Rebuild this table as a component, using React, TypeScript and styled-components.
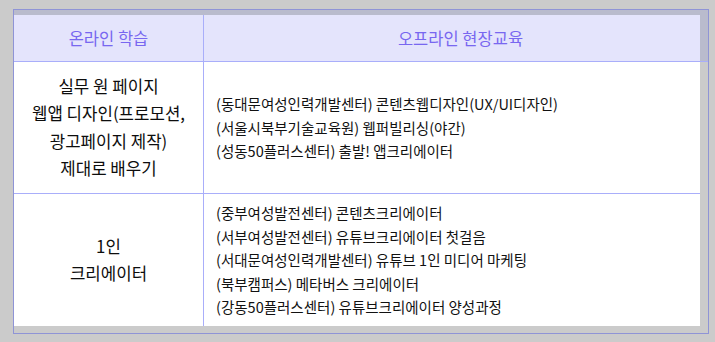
import styled, { createGlobalStyle } from "styled-components";

const LINE = "#a9aefa";

const GlobalStyle = createGlobalStyle`
  html, body {
    margin: 0;
    padding: 0;
    background: #cbcbcb;
    font-family: "Noto Sans CJK KR", "Noto Sans", sans-serif;
  }
`;

type Course = { org: string; title: string };

const rows: { topic: string[]; courses: Course[]; height: number }[] = [
  {
    topic: ["실무 원 페이지", "웹앱 디자인(프로모션,", "광고페이지 제작)", "제대로 배우기"],
    height: 131,
    courses: [
      { org: "동대문여성인력개발센터", title: "콘텐츠웹디자인(UX/UI디자인)" },
      { org: "서울시북부기술교육원", title: "웹퍼빌리싱(야간)" },
      { org: "성동50플러스센터", title: "출발! 앱크리에이터" },
    ],
  },
  {
    topic: ["1인", "크리에이터"],
    height: 132,
    courses: [
      { org: "중부여성발전센터", title: "콘텐츠크리에이터" },
      { org: "서부여성발전센터", title: "유튜브크리에이터 첫걸음" },
      { org: "서대문여성인력개발센터", title: "유튜브 1인 미디어 마케팅" },
      { org: "북부캠퍼스", title: "메타버스 크리에이터" },
      { org: "강동50플러스센터", title: "유튜브크리에이터 양성과정" },
    ],
  },
];

const App = () => {
  return (
    <>
      <GlobalStyle />
      <Frame>
        <HeadBand>
          <HeaderRow>
            <HeadCell>온라인 학습</HeadCell>
            <HeadCell wide>오프라인 현장교육</HeadCell>
          </HeaderRow>
        </HeadBand>
        <Body>
          {rows.map((row, i) => (
            <Row key={i} h={row.height} last={i === rows.length - 1}>
              <TopicCell>
                {row.topic.map((line) => (
                  <div key={line}>{line}</div>
                ))}
              </TopicCell>
              <CourseCell>
                {row.courses.map((c) => (
                  <div key={c.org}>
                    ({c.org}) {c.title}
                  </div>
                ))}
              </CourseCell>
            </Row>
          ))}
        </Body>
      </Frame>
    </>
  );
};

export default App;

const Frame = styled.div`
  box-sizing: border-box;
  margin: 9px 0 0 13px;
  width: 696px;
  border: 1px solid #8f94d6;
  background: #cbcbcb;
  padding-bottom: 7px;
`;

const HeadBand = styled.div`
  background: #b9bbcd;
  padding-top: 5px;
  border-bottom: 1px solid ${LINE};
`;

const HeaderRow = styled.div`
  display: grid;
  grid-template-columns: 190px 1fr;
  height: 46px;
  margin-right: 8px;
  background: #e4e4fc;
`;

const HeadCell = styled.div<{ wide?: boolean }>`
  display: flex;
  align-items: center;
  justify-content: center;
  padding-left: ${(p) => (p.wide ? "9px" : "0")};
  margin-right: ${(p) => (p.wide ? "-8px" : "0")};
  border-right: ${(p) => (p.wide ? "none" : `1px solid ${LINE}`)};
  color: #7867f0;
  font-size: 16.5px;
`;

const Body = styled.div`
  margin-right: 8px;
  background: #fff;
`;

const Row = styled.div<{ h: number; last: boolean }>`
  display: grid;
  grid-template-columns: 190px 1fr;
  height: ${(p) => p.h}px;
  border-bottom: ${(p) => (p.last ? "none" : `1px solid ${LINE}`)};
`;

const TopicCell = styled.div`
  display: flex;
  flex-direction: column;
  align-items: center;
  justify-content: center;
  border-right: 1px solid ${LINE};
  color: #0d0d0d;
  font-size: 16.8px;
  line-height: 27.5px;
  text-align: center;
`;

const CourseCell = styled.div`
  display: flex;
  flex-direction: column;
  justify-content: center;
  padding-left: 12px;
  color: #111;
  font-size: 14.5px;
  line-height: 23.5px;
`;
